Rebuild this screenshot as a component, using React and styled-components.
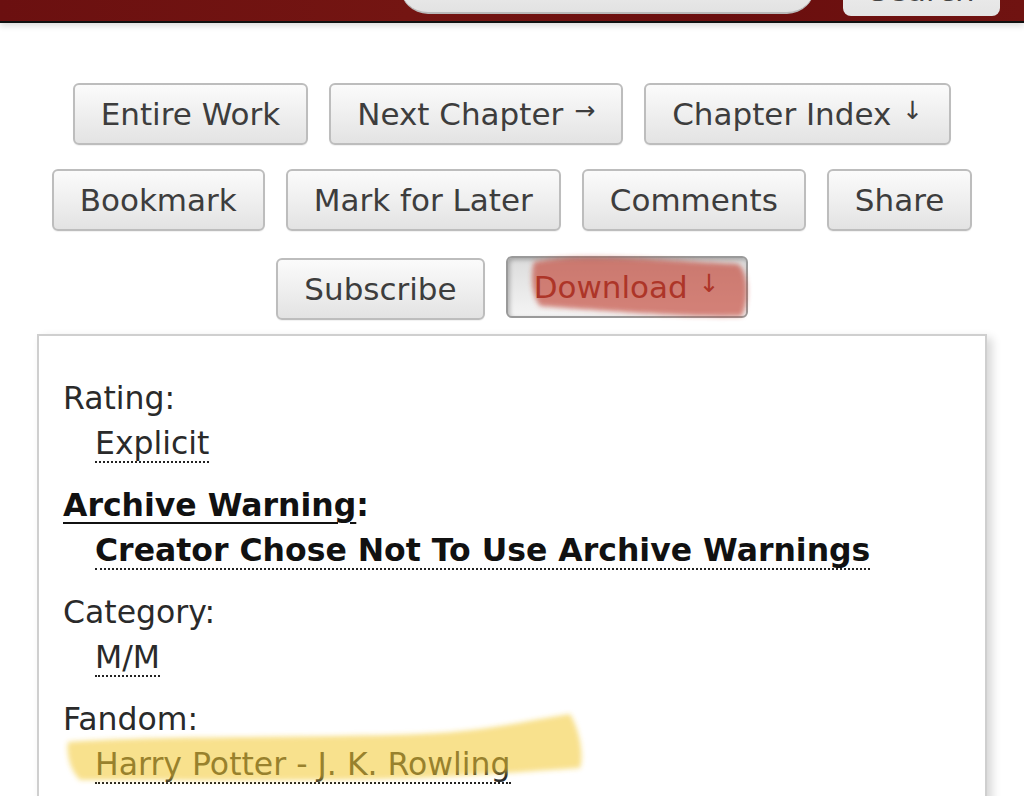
import React from "react";
import styled, { createGlobalStyle } from "styled-components";

const GlobalStyle = createGlobalStyle`
  body {
    margin: 0;
    background: #fff;
    font-family: "DejaVu Sans", Verdana, sans-serif;
    color: #2a2a2a;
  }
`;

const Page = styled.div`
  position: relative;
  min-height: 100vh;
  overflow: hidden;
`;

const Header = styled.header`
  height: 21px;
  overflow: hidden;
  display: flex;
  align-items: flex-end;
  background: linear-gradient(90deg, #6b1010 0%, #741512 40%, #6a0e0e 70%, #701311 100%);
  border-bottom: 2px solid #111;
  box-shadow: 0 3px 6px rgba(0, 0, 0, 0.14);
  padding-left: 400px;
`;

const SearchInput = styled.div`
  width: 415px;
  height: 50px;
  margin-bottom: 7px;
  border-radius: 0 0 28px 28px;
  background: linear-gradient(#f4f4f4, #e2e2e2);
  border-bottom: 2px solid #b9b9b9;
  flex-shrink: 0;
`;

const SearchButton = styled.div`
  width: 157px;
  height: 50px;
  margin-left: 28px;
  margin-bottom: 5px;
  border-radius: 0 0 8px 8px;
  background: linear-gradient(#f2f2f2, #e4e4e4);
  display: flex;
  align-items: flex-end;
  justify-content: center;
  padding-bottom: 10px;
  box-sizing: border-box;
  font-size: 31px;
  line-height: 31px;
  color: #444;
  flex-shrink: 0;
`;

const Nav = styled.nav`
  margin-top: 60px;
  display: flex;
  flex-direction: column;
  align-items: center;
`;

const Row = styled.div`
  display: flex;
  justify-content: center;
  gap: 21px;
  margin-bottom: ${(p) => p.$gap ?? 24}px;
`;

const Button = styled.div`
  height: 62px;
  box-sizing: border-box;
  padding: 0 26px;
  display: flex;
  align-items: center;
  font-size: 31px;
  color: ${(p) => (p.$active ? "#8e2a22" : "#3d3d3d")};
  border: 2px solid ${(p) => (p.$active ? "#9a9a9a" : "#bdbdbd")};
  border-radius: 6px;
  background: ${(p) =>
    p.$active
      ? "linear-gradient(#dcdcdc, #f4f4f4)"
      : "linear-gradient(#fbfbfb, #e3e3e3)"};
  box-shadow: ${(p) =>
    p.$active ? "inset 2px 2px 4px rgba(0,0,0,0.25)" : "0 1px 1px rgba(0,0,0,0.06)"};
  white-space: nowrap;
  margin-top: ${(p) => (p.$active ? -2 : 0)}px;
`;

const Arrow = styled.span`
  font-size: 25px;
  margin-left: 11px;
  position: relative;
  top: -4px;
`;

const Box = styled.section`
  margin: 14px 37px 0 37px;
  border: 2px solid #cfcfcf;
  box-shadow: 5px 4px 9px rgba(0, 0, 0, 0.16);
  padding: 40px 24px 60px;
`;

const List = styled.dl`
  margin: 0;
  font-size: 31.5px;
  line-height: 45px;
`;

const Term = styled.dt`
  font-weight: ${(p) => (p.$bold ? 700 : 400)};
  color: ${(p) => (p.$bold ? "#111" : "#2a2a2a")};
`;

const TermLink = styled.span`
  text-decoration: underline;
  text-decoration-thickness: 2px;
  text-underline-offset: 6px;
`;

const Value = styled.dd`
  margin: 0 0 17px 32px;
  font-weight: ${(p) => (p.$bold ? 700 : 400)};
  color: ${(p) => (p.$bold ? "#111" : "#2a2a2a")};
`;

const Tag = styled.span`
  border-bottom: 2px dotted #222;
`;

const Highlight = styled.svg`
  position: absolute;
  pointer-events: none;
  overflow: visible;
`;

const items = [
  { term: "Rating:", value: "Explicit" },
  { term: "Archive Warning", link: true, value: "Creator Chose Not To Use Archive Warnings", bold: true },
  { term: "Category:", value: "M/M" },
  { term: "Fandom:", value: "Harry Potter - J. K. Rowling" },
];

export default function App() {
  return (
    <Page>
      <GlobalStyle />
      <Header>
        <SearchInput />
        <SearchButton>Search</SearchButton>
      </Header>
      <Nav>
        <Row>
          <Button>Entire Work</Button>
          <Button>
            Next Chapter<Arrow>→</Arrow>
          </Button>
          <Button>
            Chapter Index<Arrow>↓</Arrow>
          </Button>
        </Row>
        <Row $gap={27}>
          <Button>Bookmark</Button>
          <Button>Mark for Later</Button>
          <Button>Comments</Button>
          <Button>Share</Button>
        </Row>
        <Row $gap={0}>
          <Button>Subscribe</Button>
          <Button $active>
            Download<Arrow>↓</Arrow>
          </Button>
        </Row>
      </Nav>
      <Box>
        <List>
          {items.map((it) => (
            <React.Fragment key={it.term}>
              <Term $bold={it.link}>
                {it.link ? (
                  <>
                    <TermLink>{it.term}</TermLink>:
                  </>
                ) : (
                  it.term
                )}
              </Term>
              <Value $bold={it.bold}>
                <Tag>{it.value}</Tag>
              </Value>
            </React.Fragment>
          ))}
        </List>
      </Box>

      <Highlight style={{ left: 0, top: 0 }} width="1024" height="796">
        <defs>
          <filter id="soft" x="-10%" y="-30%" width="120%" height="160%">
            <feGaussianBlur stdDeviation="2.5" />
          </filter>
        </defs>
        <path
          d="M534 262 C580 252 660 260 738 264 C748 270 750 300 742 316 C700 318 620 312 540 306 C532 296 530 276 534 262 Z"
          fill="rgba(192,58,44,0.62)"
          filter="url(#soft)"
        />
        <path
          d="M68 742 C150 736 300 738 420 734 C480 732 520 722 570 714 C580 730 584 756 580 768 C520 772 470 776 420 778 C300 782 180 780 80 780 C70 770 66 754 68 742 Z"
          fill="rgba(242,200,48,0.55)"
          filter="url(#soft)"
        />
      </Highlight>
    </Page>
  );
}
